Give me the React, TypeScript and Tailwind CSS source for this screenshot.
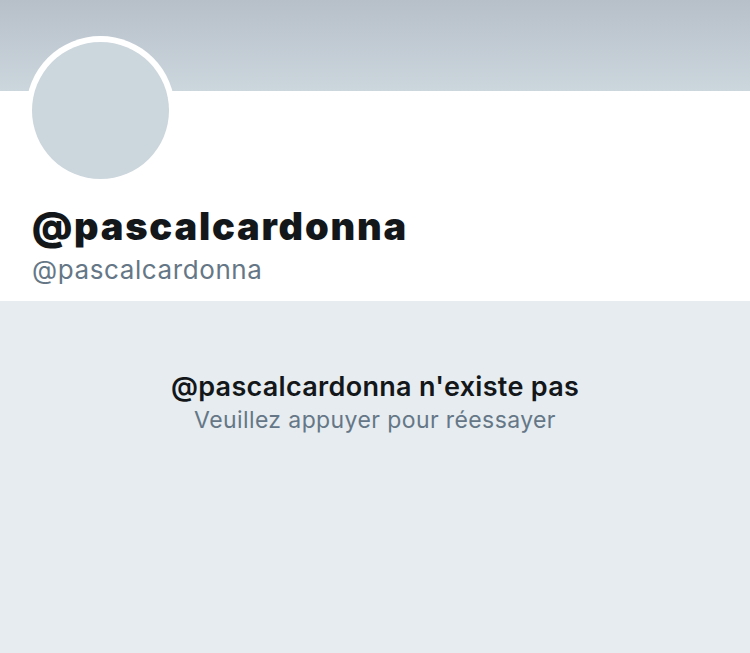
export default function App() {
    return (
        <div className="w-[750px] h-[653px] flex flex-col bg-[#e6ecf0] font-['Inter',sans-serif] overflow-hidden">
            <div className="h-[91px] shrink-0 bg-gradient-to-b from-[#b7c0c9] to-[#ccd6dd]" />

            <div className="bg-white shrink-0 h-[210px] px-[26px]">
                <div className="w-[149px] h-[149px] -mt-[55px] rounded-full bg-white p-[6px]">
                    <div className="w-full h-full rounded-full bg-[#ccd6dd]" />
                </div>
                <div className="pl-[6px] mt-[18px]">
                    <h1 className="text-[38px] leading-[46px] font-black text-[#14171a] tracking-[1.8px]">
                        @pascalcardonna
                    </h1>
                    <p className="text-[26px] leading-[32px] mt-[5px] text-[#657786] tracking-[0.6px]">
                        @pascalcardonna
                    </p>
                </div>
            </div>

            <div className="flex flex-col items-center pt-[70px]">
                <p className="text-[27px] leading-[32px] font-semibold text-[#14171a] tracking-[0.3px]">
                    @pascalcardonna n'existe pas
                </p>
                <p className="text-[23px] leading-[28px] mt-[3px] text-[#657786] tracking-[0.4px]">
                    Veuillez appuyer pour réessayer
                </p>
            </div>
        </div>
    )
}
